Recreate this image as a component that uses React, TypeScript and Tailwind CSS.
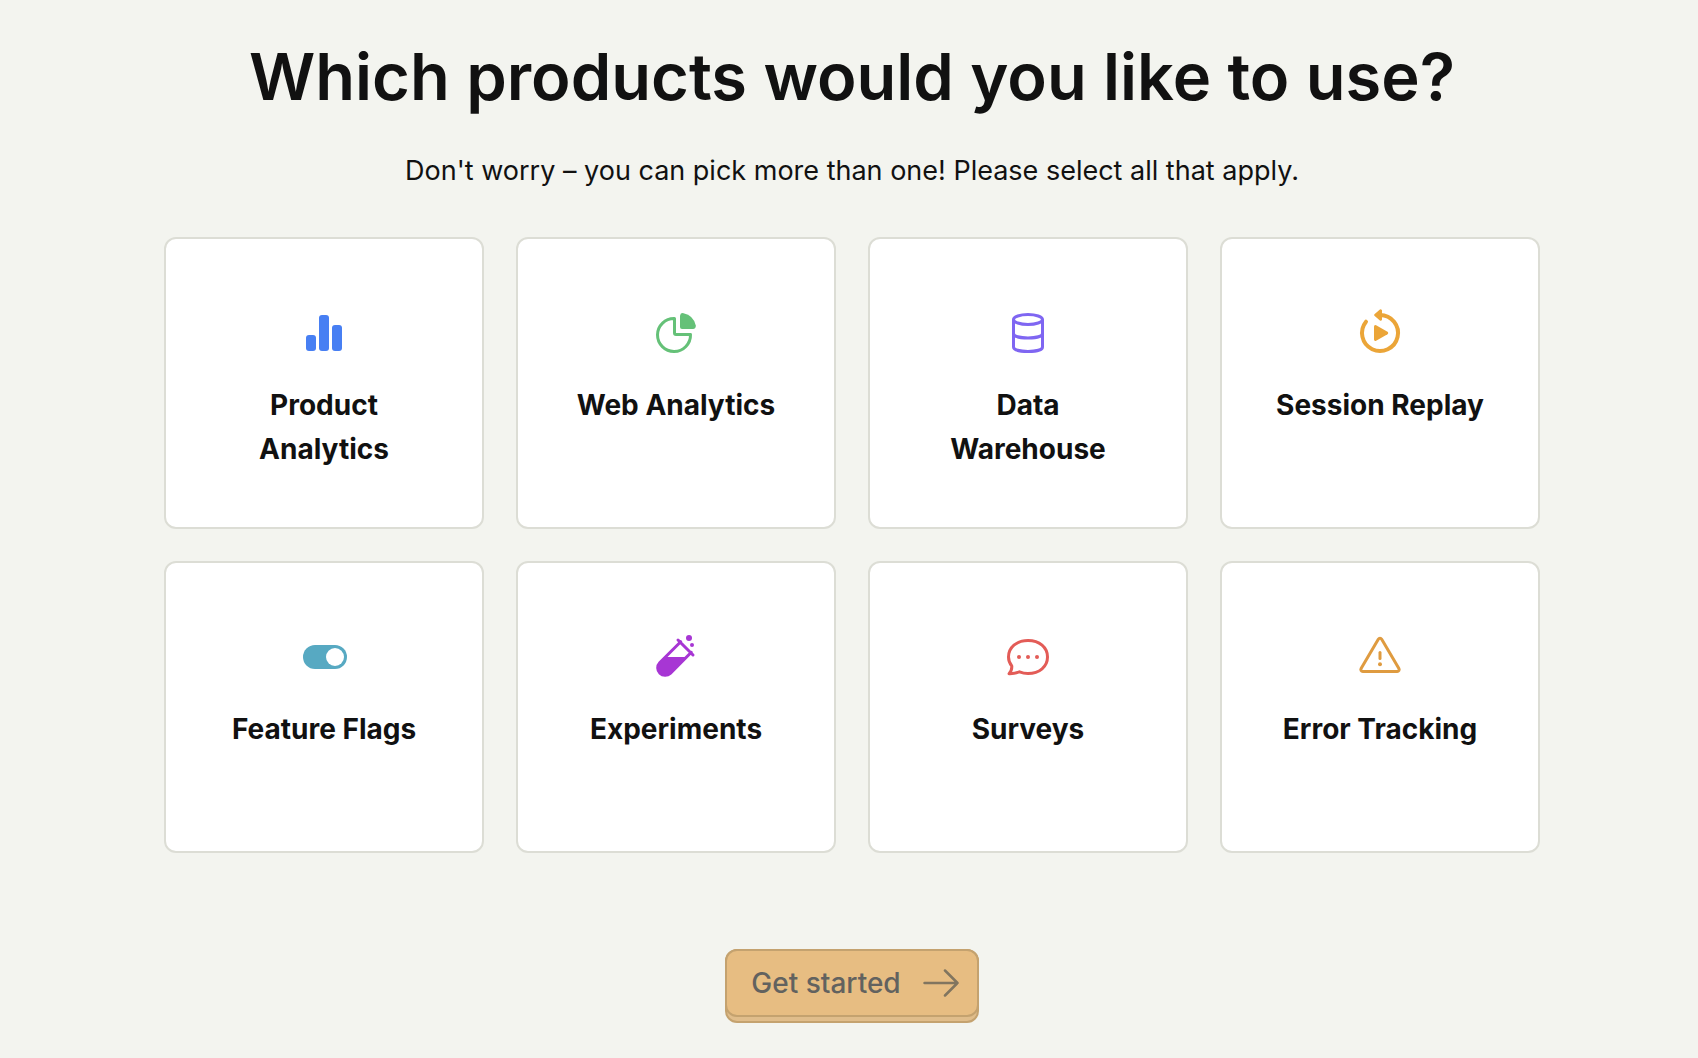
import { useState, type ReactNode } from "react";

type Product = { name: string; color: string; icon: ReactNode };

const products: Product[] = [
  {
    name: "Product Analytics",
    color: "text-[#477ff3]",
    icon: (
      <g fill="currentColor">
        <rect x="6" y="26" width="10" height="16" rx="3" />
        <rect x="19" y="6" width="10" height="36" rx="3" />
        <rect x="32" y="16" width="10" height="26" rx="3" />
      </g>
    ),
  },
  {
    name: "Web Analytics",
    color: "text-[#65c178]",
    icon: (
      <>
        <path
          d="M22.5 9.5V24a1.5 1.5 0 0 0 1.5 1.5h14.5a16.5 16.5 0 1 1-16-16Z"
          fill="none"
          stroke="currentColor"
          strokeWidth="3"
          strokeLinejoin="round"
        />
        <path
          d="M28 6.5A3 3 0 0 1 31.5 4.200A16 16 0 0 1 43.800 16.500A3 3 0 0 1 41 20H30a2 2 0 0 1-2-2Z"
          fill="currentColor"
        />
      </>
    ),
  },
  {
    name: "Data Warehouse",
    color: "text-[#7f66f2]",
    icon: (
      <g fill="none" stroke="currentColor" strokeWidth="3">
        <ellipse cx="24" cy="10.500" rx="14.500" ry="5" />
        <path d="M9.500 10.500V38c0 2.800 6.500 4.500 14.500 4.500s14.500-1.700 14.500-4.500V10.500" />
        <path d="M9.500 24.500c0 2.800 6.500 4.500 14.500 4.500s14.500-1.700 14.500-4.500" />
      </g>
    ),
  },
  {
    name: "Session Replay",
    color: "text-[#eba538]",
    icon: (
      <>
        <path
          d="M24 6a18 18 0 1 1-14 6.700"
          fill="none"
          stroke="currentColor"
          strokeWidth="4"
          strokeLinecap="round"
        />
        <path
          d="M18.700 4.900 23.900.600a1.300 1.300 0 0 1 2.100 1V10.400a1.300 1.300 0 0 1-2.100 1L18.700 7.100a1.400 1.400 0 0 1 0-2.200Z"
          fill="currentColor"
        />
        <path
          d="M18 17.400a1.400 1.400 0 0 1 2.100-1.200l11.400 6.600a1.400 1.400 0 0 1 0 2.400l-11.400 6.600A1.400 1.400 0 0 1 18 30.600Z"
          fill="currentColor"
        />
      </>
    ),
  },
  {
    name: "Feature Flags",
    color: "text-[#57a9c2]",
    icon: (
      <>
        <rect x="3" y="12" width="44" height="24" rx="12" fill="currentColor" />
        <circle cx="35" cy="24" r="9" fill="white" />
      </>
    ),
  },
  {
    name: "Experiments",
    color: "text-[#a736d4]",
    icon: (
      <>
        <path
          d="M28.700 8.700l-21 21a7.500 7.500 0 0 0 10.600 10.600l21-21M26 7l15 15"
          fill="none"
          stroke="currentColor"
          strokeWidth="3"
          strokeLinecap="round"
        />
        <path d="M13.400 24h21.200L18.300 40.300A7.500 7.500 0 0 1 7.700 29.700Z" fill="currentColor" />
        <circle cx="37" cy="5" r="3" fill="currentColor" />
        <circle cx="40" cy="12" r="2" fill="currentColor" />
      </>
    ),
  },
  {
    name: "Surveys",
    color: "text-[#e35c57]",
    icon: (
      <>
        <path
          d="M24 7.500c11.500 0 19.500 7 19.500 16.500S35.500 40.500 24 40.500c-3.500 0-5.800-.600-8.500-1.700-3 1.600-6.300 2-10.500 1.900 2.200-2.300 3-4.400 2.800-7.700C5.700 30.500 4.500 27.400 4.500 24 4.500 14.500 12.500 7.500 24 7.500Z"
          fill="none"
          stroke="currentColor"
          strokeWidth="3"
          strokeLinejoin="round"
        />
        <g fill="currentColor">
          <circle cx="15" cy="24" r="2" />
          <circle cx="24" cy="24" r="2" />
          <circle cx="33" cy="24" r="2" />
        </g>
      </>
    ),
  },
  {
    name: "Error Tracking",
    color: "text-[#df9b40]",
    icon: (
      <>
        <path
          d="M22.300 6.200a2 2 0 0 1 3.400 0L42.900 35.500a2 2 0 0 1-1.700 3H6.800a2 2 0 0 1-1.700-3Z"
          fill="none"
          stroke="currentColor"
          strokeWidth="3"
        />
        <path d="M24 19.500v6" stroke="currentColor" strokeWidth="3" strokeLinecap="round" />
        <circle cx="24" cy="31.300" r="2" fill="currentColor" />
      </>
    ),
  },
];

function ProductCard({ product, selected, onToggle }: { product: Product; selected: boolean; onToggle: () => void }) {
  return (
    <button
      type="button"
      aria-pressed={selected}
      onClick={onToggle}
      className="flex min-h-[292px] cursor-pointer flex-col items-center rounded-xl border-2 border-[#dcddd5] bg-white px-12 pt-[70px] pb-14 aria-pressed:border-[#eb9d2a]"
    >
      <svg viewBox="0 0 48 48" aria-hidden="true" className={`size-12 shrink-0 overflow-visible ${product.color}`}>
        {product.icon}
      </svg>
      <span className="mt-[26px] text-[28px] leading-11 font-bold">{product.name}</span>
    </button>
  );
}

export default function App() {
  const [selected, setSelected] = useState<string[]>([]);
  const toggle = (name: string) =>
    setSelected((current) => (current.includes(name) ? current.filter((n) => n !== name) : [...current, name]));

  return (
    <main className="flex min-h-screen flex-col items-center bg-[#f3f4ef] pt-10 pb-8 pl-1.5 font-['Inter',sans-serif] text-[#111]">
      <h1 className="text-center text-[65px] leading-[73px] font-semibold">Which products would you like to use?</h1>
      <p className="mt-9 text-center text-[27px] leading-11">Don't worry – you can pick more than one! Please select all that apply.</p>
      <div className="mt-11 grid w-full max-w-[1376px] grid-cols-4 gap-8">
        {products.map((product) => (
          <ProductCard
            key={product.name}
            product={product}
            selected={selected.includes(product.name)}
            onToggle={() => toggle(product.name)}
          />
        ))}
      </div>
      <button type="button" className="mt-24 rounded-xl border-2 border-[#c4a26f] bg-[#e0bd8b] pb-1">
        <span className="-mx-0.5 -mt-0.5 flex items-center gap-[22px] rounded-xl border-2 border-[#c4a26f] bg-[#e7bd82] py-2.5 pr-[18px] pl-6 text-[28px] leading-11 font-medium text-[#62625f]">
          Get started
          <svg
            viewBox="0 0 36 28"
            aria-hidden="true"
            className="h-7 w-9 fill-none stroke-[#81755f] stroke-[2.5]"
            strokeLinecap="round"
            strokeLinejoin="round"
          >
            <path d="M1.500 14h33M22 1.500 34.500 14 22 26.500" />
          </svg>
        </span>
      </button>
    </main>
  );
}
